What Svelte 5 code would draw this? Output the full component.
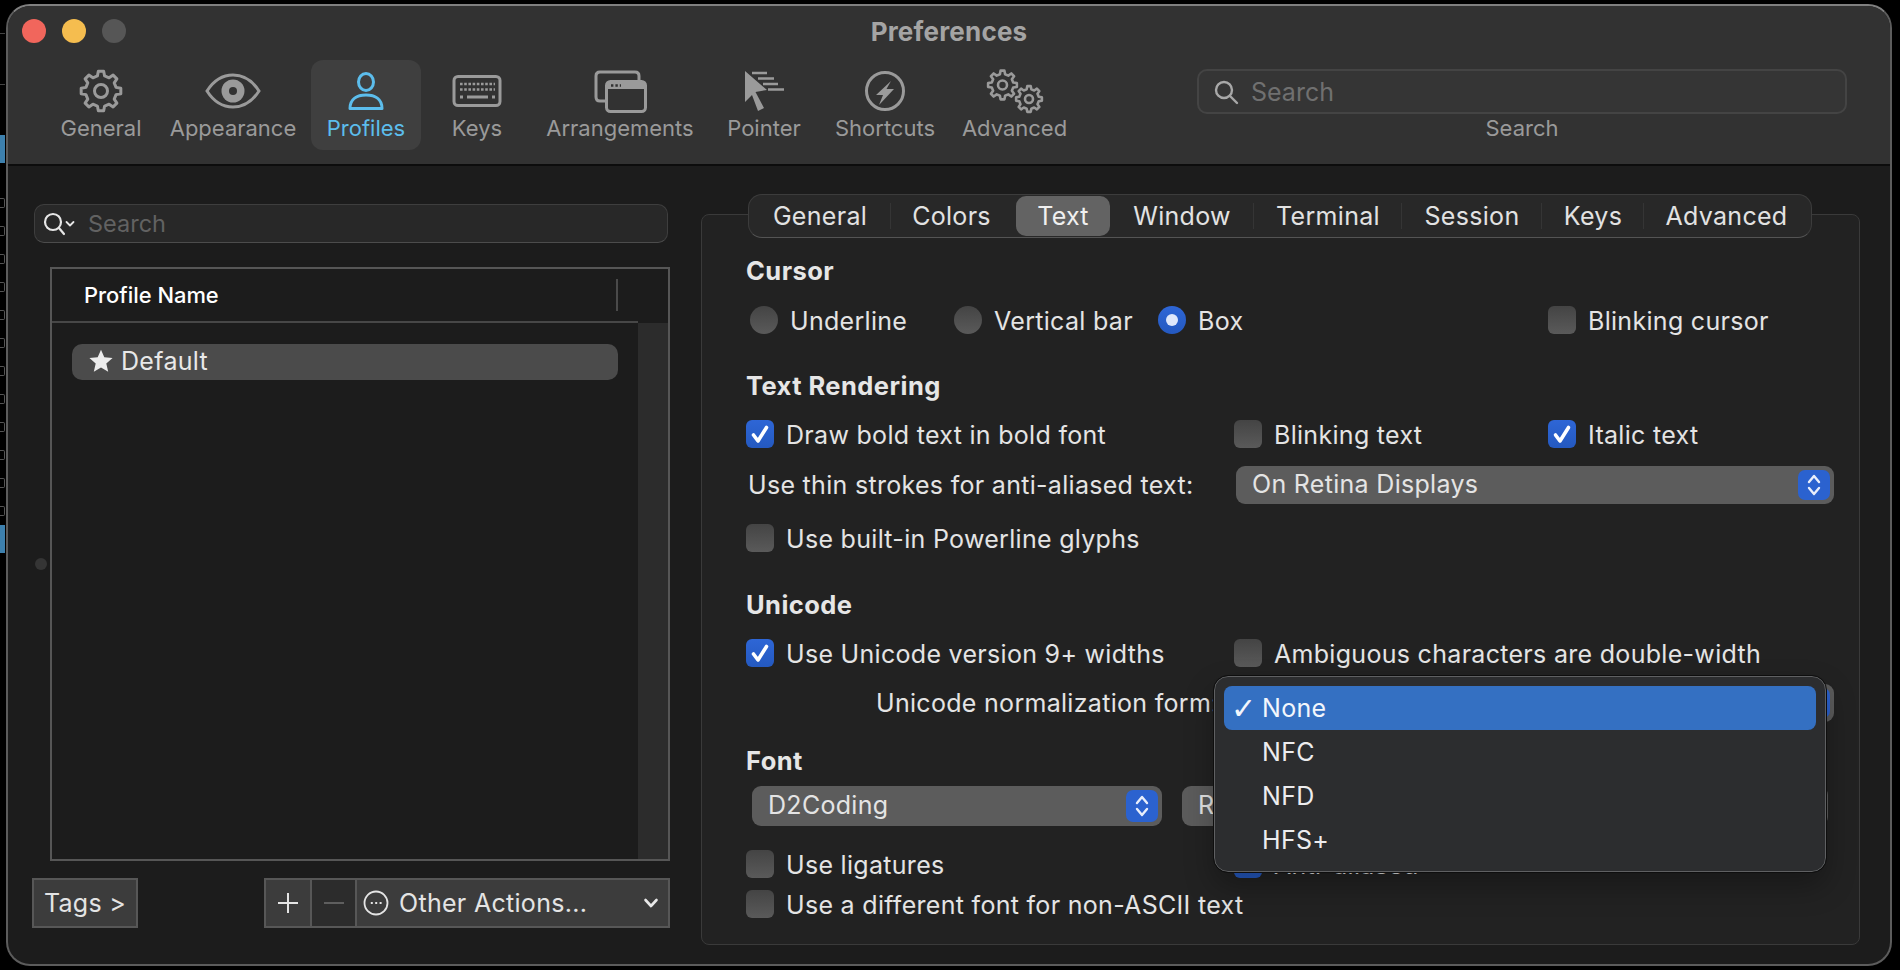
<script>
  function gear(cx, cy, ro, ri, n = 8) {
    const pts = [];
    const step = (Math.PI * 2) / n;
    for (let i = 0; i < n; i++) {
      const a = i * step - Math.PI / 2;
      const t = step * 0.17, b = step * 0.3;
      pts.push([ri, a - b], [ro, a - t], [ro, a + t], [ri, a + b]);
    }
    return 'M' + pts.map(([r, a]) => (cx + r * Math.cos(a)).toFixed(2) + ' ' + (cy + r * Math.sin(a)).toFixed(2)).join('L') + 'Z';
  }
  const tabs = ['General', 'Colors', 'Text', 'Window', 'Terminal', 'Session', 'Keys', 'Advanced'];
  const glyphRows = Array.from({ length: 12 }, (_, i) => i);
</script>

{#snippet stepper()}
  <span class="stepper">
    <svg width="18" height="26" viewBox="0 0 18 26" fill="none" stroke="#e8eefb" stroke-width="2.4" stroke-linecap="round" stroke-linejoin="round">
      <path d="M4 10 L9 4 L14 10" /><path d="M4 16 L9 22 L14 16" />
    </svg>
  </span>
{/snippet}

{#snippet check(on)}
  <span class="box" class:on>
    {#if on}
      <svg width="28" height="28" viewBox="0 0 28 28" fill="none" stroke="#fff" stroke-width="3.6" stroke-linecap="round" stroke-linejoin="round"><path d="M7.5 15 L12 21 L20.5 7.5" /></svg>
    {/if}
  </span>
{/snippet}

<div class="screen">
  <div class="strip">
    <span class="tick t1"></span><span class="tick t2"></span>
    <span class="blue b1"></span>
    {#each glyphRows as g (g)}
      <span class="glyph"></span>
    {/each}
    <span class="blue b2"></span>
  </div>

  <div class="window">
    <header class="titlebar">
      <div class="titlerow">
        <div class="lights"><span class="red"></span><span class="yellow"></span><span class="grey"></span></div>
        <div class="title">Preferences</div>
        <div></div>
      </div>
      <div class="toolbar">
        <div class="tools">
          <div class="tool">
            <svg class="ic" width="70" height="50" viewBox="0 0 70 50" fill="none" stroke="currentColor" stroke-width="3" stroke-linejoin="round">
              <path d={gear(35, 25, 20, 15.5)} /><circle cx="35" cy="25" r="6.5" />
            </svg>
            <span>General</span>
          </div>
          <div class="tool">
            <svg class="ic" width="70" height="50" viewBox="0 0 70 50" fill="none" stroke="currentColor" stroke-width="3">
              <path d="M9 25 C16 14 25 9 35 9 S54 14 61 25 C54 36 45 41 35 41 S16 36 9 25Z" />
              <circle cx="35" cy="25" r="11.5" fill="currentColor" stroke="none" /><circle cx="35" cy="25" r="4" fill="#323232" stroke="none" />
            </svg>
            <span>Appearance</span>
          </div>
          <div class="tool active">
            <svg class="ic" width="70" height="50" viewBox="0 0 70 50" fill="none" stroke="currentColor" stroke-width="3" stroke-linejoin="round">
              <ellipse cx="35" cy="16" rx="7.5" ry="8.5" /><path d="M19 42.5 C19 33 26 29 35 29 C44 29 51 33 51 42.5 Z" />
            </svg>
            <span>Profiles</span>
          </div>
          <div class="tool">
            <svg class="ic" width="70" height="50" viewBox="0 0 70 50" fill="none" stroke="currentColor" stroke-width="3">
              <rect x="12" y="10.5" width="46" height="29" rx="4" />
              <path stroke-width="2.6" stroke-dasharray="2.6 1.6" d="M18 18 H53 M18 23.5 H53" />
              <path stroke-width="2.8" d="M18 31 H21 M25 31 H46 M50 31 H53" />
            </svg>
            <span>Keys</span>
          </div>
          <div class="tool">
            <svg class="ic" width="70" height="50" viewBox="0 0 70 50" fill="none" stroke="currentColor" stroke-width="3" stroke-linejoin="round">
              <path d="M20 35 H15 Q11 35 11 31 V10 Q11 6 15 6 H50 Q54 6 54 10 V14" />
              <rect x="21.5" y="15.5" width="39" height="30" rx="4" />
              <path d="M22 17 Q22 15 25 15 H58 Q60 15 60 17 V23 H22 Z" fill="currentColor" stroke="none" />
              <path stroke="#323232" stroke-width="2.4" stroke-dasharray="2.4 2" d="M26 19.5 H36" />
            </svg>
            <span>Arrangements</span>
          </div>
          <div class="tool">
            <svg class="ic" width="70" height="50" viewBox="0 0 70 50" fill="currentColor" stroke="none">
              <path d="M16 5 L38 24 L26.5 26 L35 42 L29 45 L23 29 L16 36 Z" />
              <path fill="none" stroke="currentColor" stroke-width="2.6" d="M23 7 H38 M29 12.5 H45 M34 18 H49 M39 23.5 H55" />
            </svg>
            <span>Pointer</span>
          </div>
          <div class="tool">
            <svg class="ic" width="70" height="50" viewBox="0 0 70 50" fill="none" stroke="currentColor" stroke-width="3">
              <circle cx="35" cy="25" r="18.5" />
              <path d="M41 15 L26 29 H33 L29 39 L44 23 H36.5 Z" fill="currentColor" stroke="none" />
            </svg>
            <span>Shortcuts</span>
          </div>
          <div class="tool">
            <svg class="ic" width="70" height="50" viewBox="0 0 70 50" fill="none" stroke="currentColor" stroke-width="2.6" stroke-linejoin="round">
              <path d={gear(22.5, 19, 14.5, 11)} /><circle cx="22.5" cy="19" r="4.5" />
              <path d={gear(49, 33, 13, 10)} /><circle cx="49" cy="33" r="4" />
            </svg>
            <span>Advanced</span>
          </div>
        </div>
        <div class="topsearch">
          <div class="field">
            <svg width="28" height="28" viewBox="0 0 28 28" fill="none" stroke="#a8a8a8" stroke-width="2.4" stroke-linecap="round"><circle cx="12" cy="12" r="8" /><path d="M18 18 L25 25" /></svg>
            <span>Search</span>
          </div>
          <div class="fieldlabel">Search</div>
        </div>
      </div>
    </header>

    <div class="body">
      <span class="divot"></span>
      <aside class="left">
        <div class="lsearch">
          <svg width="38" height="28" viewBox="0 0 38 28" fill="none" stroke="#e6e6e6" stroke-width="2.2" stroke-linecap="round" stroke-linejoin="round"><circle cx="12" cy="12" r="8" /><path d="M18 18 L23 24" /><path stroke-width="1.8" d="M25.5 12 L29 15.5 L32.5 12" /></svg>
          <span>Search</span>
        </div>
        <div class="table">
          <div class="tmain">
            <div class="thead"><span>Profile Name</span><i></i></div>
            <div class="prow">
              <svg width="24" height="24" viewBox="0 0 24 24" fill="#ececec"><path d="M12 .8 L15.3 8.3 L23.6 9.1 L17.3 14.6 L19.2 22.8 L12 18.5 L4.8 22.8 L6.7 14.6 L.4 9.1 L8.7 8.3 Z" /></svg>
              <span>Default</span>
            </div>
          </div>
          <div class="tscroll"><div class="thumb"></div></div>
        </div>
        <div class="actions">
          <button class="btn tags">Tags &gt;</button>
          <div class="group">
            <button class="btn plus">
              <svg width="22" height="22" viewBox="0 0 22 22" stroke="#e4e4e4" stroke-width="2"><path d="M11 1 V21 M1 11 H21" /></svg>
            </button>
            <button class="btn minus">
              <svg width="22" height="22" viewBox="0 0 22 22" stroke="#5e5e5e" stroke-width="2"><path d="M1 11 H21" /></svg>
            </button>
            <button class="btn other">
              <svg width="26" height="26" viewBox="0 0 26 26" fill="none" stroke="#e4e4e4" stroke-width="1.8"><circle cx="13" cy="13" r="11.5" /><path stroke-width="2.2" stroke-dasharray="2 2.4" d="M7.8 13 H18.6" /></svg>
              <span>Other Actions...</span>
              <svg class="chev" width="16" height="12" viewBox="0 0 16 12" fill="none" stroke="#e8e8e8" stroke-width="2.6" stroke-linecap="round" stroke-linejoin="round"><path d="M2.5 3 L8 9 L13.5 3" /></svg>
            </button>
          </div>
        </div>
      </aside>

      <section class="panel">
        <div class="tabs">
          {#each tabs as t (t)}
            <span class="tab" class:sel={t === 'Text'}>{t}</span>
          {/each}
        </div>

        <div class="row head m13">Cursor</div>
        <div class="row radios m9">
          <label class="opt"><span class="radio"></span>Underline</label>
          <label class="opt"><span class="radio"></span>Vertical bar</label>
          <label class="opt"><span class="radio on"><b></b></span>Box</label>
          <label class="opt">{@render check(false)}Blinking cursor</label>
        </div>

        <div class="row head m26">Text Rendering</div>
        <div class="row cols m8">
          <label class="opt">{@render check(true)}Draw bold text in bold font</label>
          <label class="opt">{@render check(false)}Blinking text</label>
          <label class="opt">{@render check(true)}Italic text</label>
        </div>
        <div class="row cols m11">
          <span class="plain">Use thin strokes for anti-aliased text:</span>
          <div class="select wide">On Retina Displays{@render stepper()}</div>
        </div>
        <div class="row m13"><label class="opt">{@render check(false)}Use built-in Powerline glyphs</label></div>

        <div class="row head m27">Unicode</div>
        <div class="row cols m8">
          <label class="opt">{@render check(true)}Use Unicode version 9+ widths</label>
          <label class="opt span2">{@render check(false)}Ambiguous characters are double-width</label>
        </div>
        <div class="row cols m10">
          <span class="plain norm">Unicode normalization form:</span>
          <div class="select wide">{@render stepper()}</div>
        </div>

        <div class="row head m18">Font</div>
        <div class="row fontrow m5">
          <div class="select f1">D2Coding{@render stepper()}</div>
          <div class="select f2">Regular{@render stepper()}</div>
        </div>
        <div class="row cols m18">
          <label class="opt">{@render check(false)}Use ligatures</label>
          <label class="opt span2">{@render check(true)}Anti-aliased</label>
        </div>
        <div class="row"><label class="opt">{@render check(false)}Use a different font for non-ASCII text</label></div>

        <div class="menu">
          <div class="item cur"><span class="tickmark">✓</span>None</div>
          <div class="item">NFC</div>
          <div class="item">NFD</div>
          <div class="item">HFS+</div>
        </div>
      </section>
    </div>
  </div>
</div>

<style>
  :global(body) { margin: 0; background: #000; }
  .screen {
    position: relative; width: 1900px; height: 970px; overflow: hidden; background: #000;
    padding: 4px 8px 4px 6px; box-sizing: border-box;
    font-family: Inter, "Liberation Sans", sans-serif; font-size: 25px; letter-spacing: .3px; color: #e4e4e4;
  }
  .strip { position: absolute; left: 0; top: 0; width: 5px; height: 970px; }
  .tick { position: absolute; left: 0; width: 5px; height: 1px; background: #444; }
  .t1 { top: 33px; } .t2 { top: 84px; }
  .blue { position: absolute; left: 0; width: 5px; height: 28px; background: #3d80ad; }
  .b1 { top: 135px; } .b2 { top: 525px; }
  .strip { display: flex; flex-direction: column; gap: 18px; padding-top: 198px; box-sizing: border-box; }
  .glyph { width: 4px; height: 8px; border: 1px solid #555; border-left: 0; border-radius: 0 2px 2px 0; flex: none; }

  .window {
    position: relative; width: 1886px; height: 962px; box-sizing: border-box; overflow: hidden;
    border: 2px solid #5c5c5c; border-top-color: #808080; border-radius: 24px; background: #1c1c1c;
  }
  .titlebar { height: 160px; box-sizing: border-box; background: #323232; border-bottom: 2px solid #0c0c0c; }
  .titlerow { height: 50px; display: grid; grid-template-columns: 1fr auto 1fr; align-items: center; }
  .lights { display: flex; gap: 16px; padding-left: 14px; }
  .lights span { width: 24px; height: 24px; border-radius: 50%; }
  .red { background: #f1665c; } .yellow { background: #f5bd4f; } .grey { background: #565656; }
  .title { font-weight: 700; font-size: 26px; letter-spacing: .2px; color: #a4a4a4; }

  .toolbar { display: flex; margin-top: 4px; padding-left: 39px; }
  .tools { display: grid; grid-template-columns: 108px 156px 110px 112px 174px 114px 128px 131px; }
  .tool {
    height: 90px; box-sizing: border-box; padding-top: 6px; border-radius: 12px;
    display: flex; flex-direction: column; align-items: center; color: #9a9a9a; font-size: 22px; letter-spacing: 0; line-height: 24px;
  }
  .tool.active { background: #3f3f3f; color: #5cbdec; }
  .ic { flex: none; display: block; }
  .topsearch { margin-left: 117px; width: 650px; padding-top: 9px; }
  .field {
    height: 45px; box-sizing: border-box; border: 2px solid #444; border-radius: 10px; background: #353535;
    display: flex; align-items: center; gap: 11px; padding-left: 13px; color: #707070; font-size: 25px; letter-spacing: 0;
  }
  .fieldlabel { text-align: center; color: #9a9a9a; font-size: 22px; letter-spacing: 0; line-height: 24px; margin-top: 2px; }

  .body { position: relative; display: flex; align-items: flex-start; height: 800px; }
  .divot { position: absolute; left: 27px; top: 392px; width: 12px; height: 12px; border-radius: 50%; background: #353535; }
  .left { width: 693px; flex: none; box-sizing: border-box; padding: 38px 0 0 26px; }
  .lsearch {
    width: 634px; height: 39px; box-sizing: border-box; border: 1.5px solid #3e3e3e; border-bottom-color: #4c4c4c; border-radius: 10px; background: #282828;
    display: flex; align-items: center; gap: 9px; padding-left: 6px; color: #626262; font-size: 23.5px; letter-spacing: 0;
  }
  .table { display: flex; width: 620px; height: 594px; box-sizing: border-box; margin: 24px 0 0 16px; border: 2px solid #565656; }
  .tmain { width: 586px; flex: none; }
  .thead {
    height: 54px; box-sizing: border-box; border-bottom: 2px solid #474747; display: flex; align-items: center; justify-content: space-between;
    padding: 0 20px 0 32px; color: #fff; font-size: 21.9px; letter-spacing: 0; font-weight: 500;
  }
  .thead i { width: 2px; height: 32px; background: #4a4a4a; }
  .prow {
    margin: 21px 0 0 20px; width: 546px; height: 36px; border-radius: 10px; background: #4b4b4b; padding-bottom: 2px;
    display: flex; align-items: center; gap: 8px; padding-left: 17px; box-sizing: border-box; color: #e8e8e8;
  }
  .tscroll { flex: 1; display: flex; flex-direction: column; }
  .thumb { margin-top: 54px; flex: 1; background: #2c2c2c; }
  .actions { display: flex; justify-content: space-between; width: 638px; margin: 17px 0 0 -2px; }
  .btn {
    height: 50px; box-sizing: border-box; border: 2px solid #575757; background: #3c3c3c; color: #e4e4e4; padding: 0;
    font: inherit; letter-spacing: inherit; display: flex; align-items: center; justify-content: center;
  }
  .tags { width: 106px; }
  .group { display: flex; }
  .plus { width: 48px; }
  .minus { width: 47px; margin-left: -2px; background: #2c2c2c; }
  .other { width: 315px; margin-left: -2px; justify-content: flex-start; padding-left: 6px; gap: 10px; }
  .chev { margin-left: auto; margin-right: 9px; }

  .panel {
    position: relative; width: 1159px; height: 731px; box-sizing: border-box; margin: 48px 0 0 0;
    background: #222; border: 1px solid #3a3a3a; border-radius: 8px; padding-left: 44px;
  }
  .tabs {
    display: grid; grid-template-columns: 142px 125px 94px 144px 148px 140px 102px 169px;
    width: 1064px; height: 44px; box-sizing: border-box; margin: -21px 0 0 2px; background: #282828;
    border: 1px solid #3c3c3c; border-bottom-color: #545454; border-radius: 14px;
  }
  .tab { display: flex; align-items: center; justify-content: center; position: relative; color: #e2e2e2; padding-bottom: 1px; }
  .tab::after { content: ""; position: absolute; right: 0; top: 8px; height: 26px; width: 1px; background: #353535; }
  .tab:last-child::after { display: none; }
  .tab:nth-child(2)::after, .tab.sel::after { display: none; }
  .tab:nth-child(2), .tab:last-child { padding-right: 4px; }
  .tab.sel { background: #636363; border-radius: 10px; margin: 1px 0; color: #f0f0f0; }

  .row { height: 40px; display: flex; align-items: center; }
  .m5 { margin-top: 5px; } .m8 { margin-top: 8px; } .m9 { margin-top: 9px; } .m10 { margin-top: 10px; }
  .m11 { margin-top: 11px; } .m13 { margin-top: 13px; } .m18 { margin-top: 18px; } .m26 { margin-top: 26px; } .m27 { margin-top: 27px; }
  .head { font-weight: 700; font-size: 25.5px; letter-spacing: .45px; color: #e6e6e6; padding-bottom: 2px; height: 38px; margin-bottom: 2px; }
  .cols { display: grid; grid-template-columns: 488px 314px 1fr; }
  .radios { display: grid; grid-template-columns: 204px 204px 390px 1fr; padding-left: 4px; }
  .opt { display: flex; align-items: center; gap: 12px; white-space: nowrap; padding-top: 2px; }
  .span2 { grid-column: 2 / 4; }
  .plain { padding-left: 2px; white-space: nowrap; }
  .norm { padding-left: 130px; }

  .box, .radio {
    width: 28px; height: 28px; flex: none; box-sizing: border-box; border-radius: 6px; display: flex; align-items: center; justify-content: center;
    background: linear-gradient(#444, #5a5a5a); margin-top: -2px;
  }
  .radio { border-radius: 50%; }
  .box.on, .radio.on { background: linear-gradient(#2e66d6, #2459c0); }
  .radio b { width: 12px; height: 12px; border-radius: 50%; background: #dfe8fb; }

  .select {
    position: relative; height: 38px; box-sizing: border-box; border-radius: 9px; background: #5c5c5c; color: #e4e4e4; padding-bottom: 2px;
    display: flex; align-items: center; padding-left: 16px; white-space: nowrap;
  }
  .wide { grid-column: 2 / 4; width: 598px; margin-left: 2px; }
  .fontrow { gap: 20px; padding-left: 6px; }
  .f1 { width: 410px; height: 40px; }
  .f2 { width: 646px; height: 40px; }
  .stepper {
    position: absolute; right: 4px; top: 4px; bottom: 4px; width: 32px; border-radius: 7px; background: #2b62cf;
    display: flex; align-items: center; justify-content: center;
  }

  .menu {
    position: absolute; left: 512px; top: 461px; width: 612px; height: 196px; box-sizing: border-box; padding: 9px;
    background: #2c2d2f; border: 1.5px solid #5f6062; outline: 1.5px solid #0e0e0e; border-radius: 14px;
    box-shadow: 0 14px 30px rgba(0, 0, 0, .3);
  }
  .item { position: relative; height: 44px; display: flex; align-items: center; padding-left: 38px; border-radius: 8px; color: #ececee; }
  .item.cur { background: #3470c2; color: #f2f6fc; }
  .tickmark { position: absolute; left: 7px; font-family: "DejaVu Sans", sans-serif; font-size: 30px; }
</style>
